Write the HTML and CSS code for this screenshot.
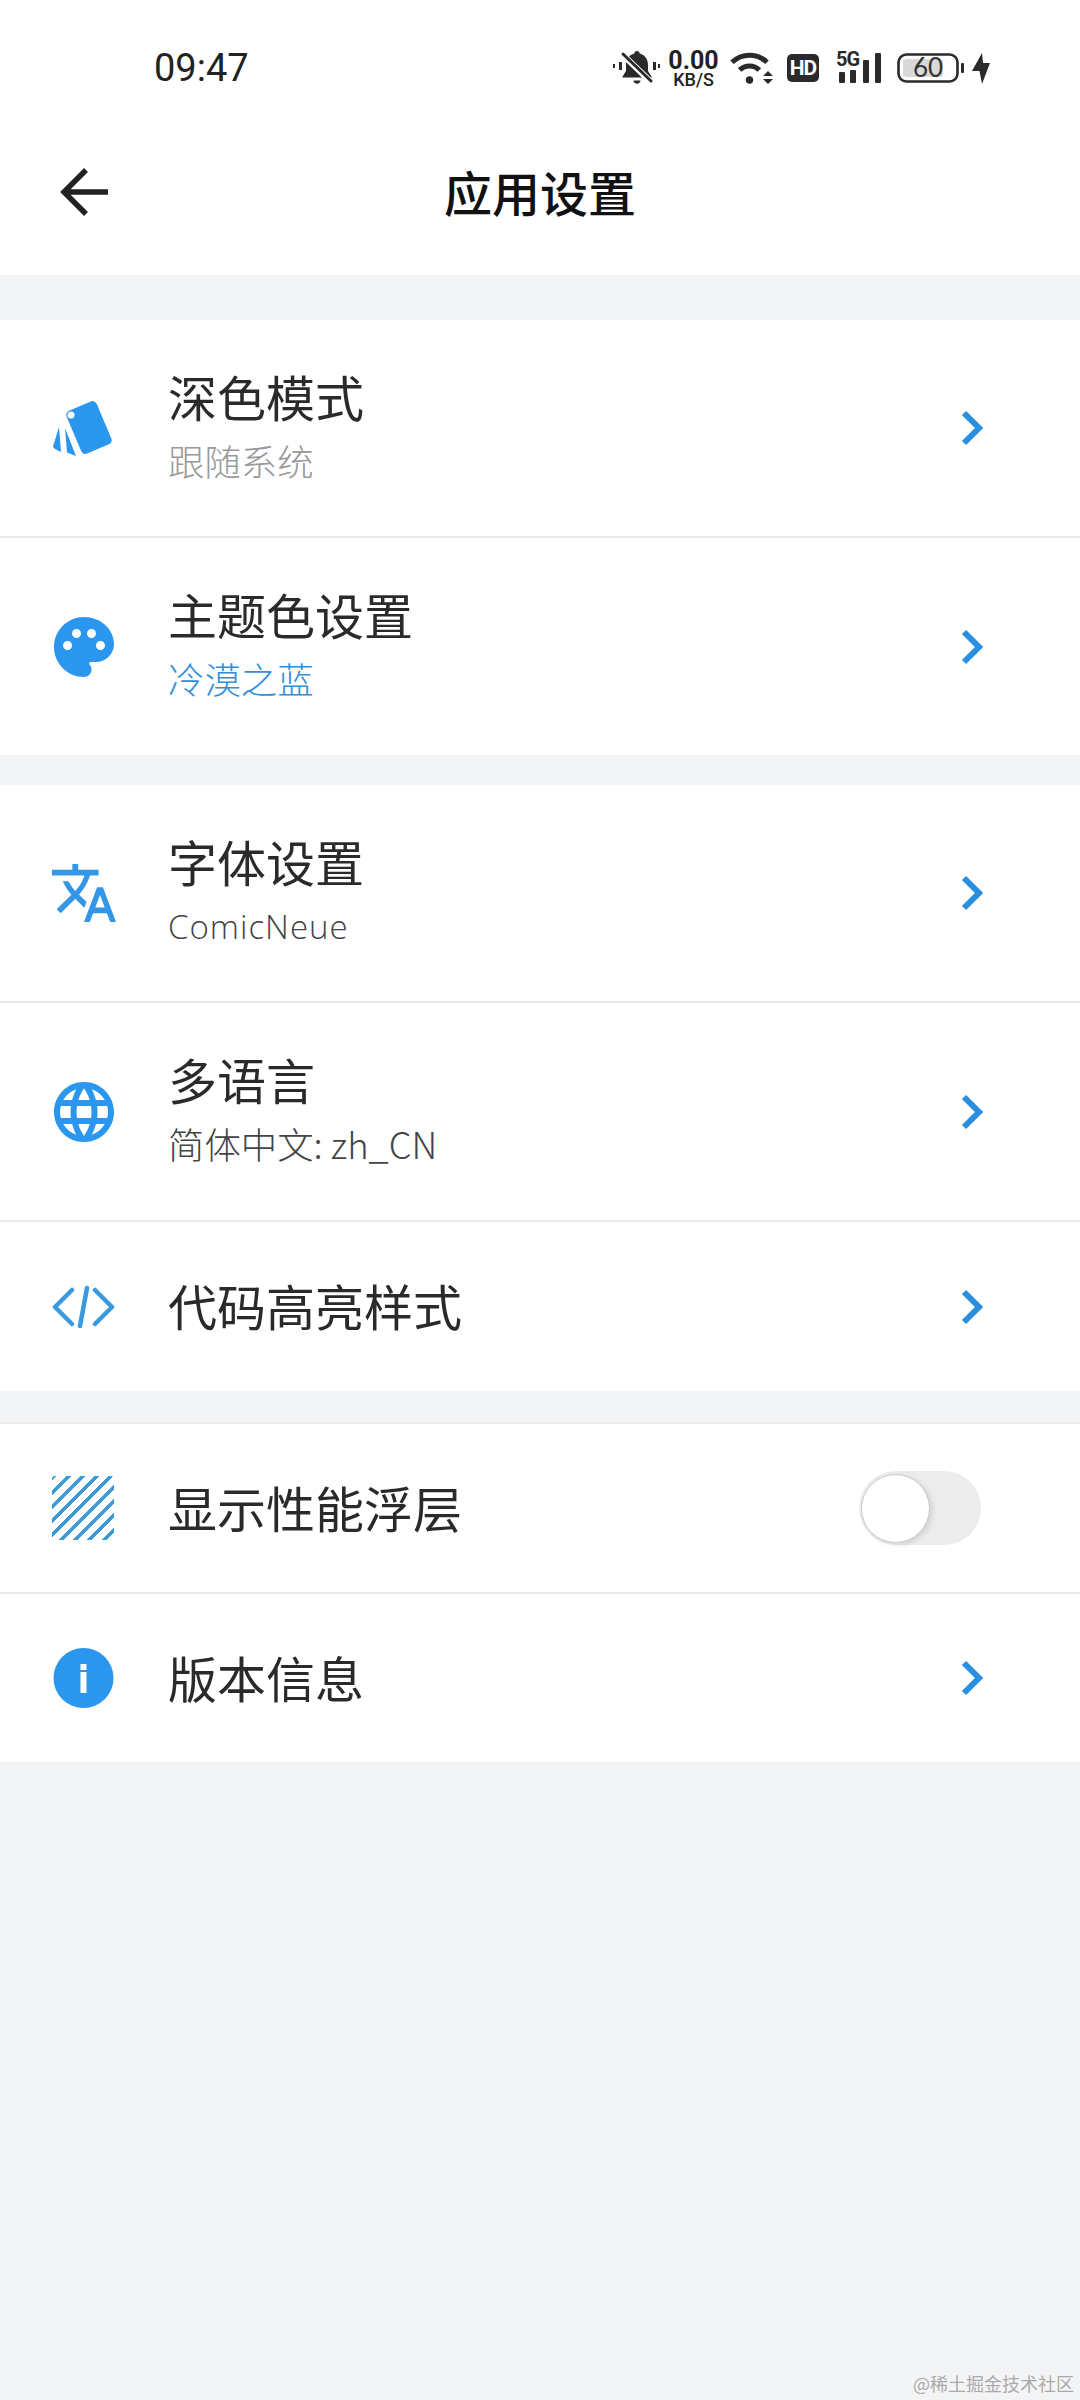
FILE: index.html
```html
<!DOCTYPE html>
<html lang="zh-CN">
<head>
<meta charset="utf-8">
<title>应用设置</title>
<link rel="stylesheet" href="styles.css">
</head>
<body>
<div class="page">
  <header class="top">
    <div class="status">
      <span class="time">09:47</span>
      <div class="status-icons">
        <svg class="s-bell" width="47" height="34" viewBox="0 0 47 34">
          <path fill="#2a2a2a" d="M24 0c-1.6 0-2.7 1-2.7 2.6C16 4 13 8.500 13 14v6l-4 6.500h30L35 20v-6c0-5.500-3-10-8.300-11.400C26.700 1 25.600 0 24 0z"/>
          <path fill="#2a2a2a" d="M20.500 29.500h7c0 1.800-1.500 3.200-3.500 3.200s-3.500-1.400-3.500-3.200z"/>
          <path stroke="#fff" stroke-width="6" d="M7 1l31 30"/>
          <path stroke="#2a2a2a" stroke-width="3" stroke-linecap="round" d="M10 3l28 27"/>
          <path fill="#2a2a2a" d="M0 13h2v4H0zM6 11h3v8H6zM40 11h3v8h-3zM45 13h2v4h-2z"/>
        </svg>
        <div class="s-speed"><span class="speed-num">0.00</span><span class="speed-unit">KB/S</span></div>
        <svg class="s-wifi" width="44" height="34" viewBox="0 0 44 34">
          <path fill="none" stroke="#2a2a2a" stroke-width="5" d="M2 11.300a25 25 0 0 1 35 0M9.600 19.100a14 14 0 0 1 19.800 0"/>
          <circle cx="19.500" cy="29" r="3.700" fill="#2a2a2a"/>
          <path fill="#2a2a2a" d="M38 20l5 5H33zM33 28h10l-5 5z"/>
        </svg>
        <span class="s-hd">HD</span>
        <svg class="s-signal" width="46" height="40" viewBox="0 -4 46 40">
          <text class="five-g" x="0" y="14">5G</text>
          <rect x="3" y="20" width="6" height="11" rx="1" fill="#2a2a2a"/>
          <rect x="14" y="18" width="6" height="13" rx="1" fill="#2a2a2a"/>
          <rect x="27" y="8" width="6" height="23" rx="1" fill="#2a2a2a"/>
          <rect x="39" y="1" width="6" height="30" rx="1" fill="#2a2a2a"/>
        </svg>
        <svg class="s-batt" width="67" height="40" viewBox="0 -5 67 40">
          <rect x="1.500" y="1.500" width="59" height="27" rx="8" fill="#fff" stroke="#2a2a2a" stroke-width="2.600"/>
          <rect x="6" y="6" width="40" height="18" rx="3" fill="#d9d9d9"/>
          <rect x="64" y="10" width="3" height="10" rx="1" fill="#2a2a2a"/>
          <text class="batt-num" x="31" y="24">60</text>
        </svg>
        <svg class="s-bolt" width="18" height="31" viewBox="0 0 18 31">
          <path fill="#2a2a2a" d="M10 0L0 18h7.500L10 31l8-21h-7z"/>
        </svg>
      </div>
    </div>
    <div class="toolbar">
      <svg class="back" width="50" height="50" viewBox="0 0 50 50">
        <path fill="none" stroke="#222" stroke-width="5.500" d="M27 3L5 25l22 22M5 25h44"/>
      </svg>
      <h1 class="title">应用设置</h1>
    </div>
  </header>

  <section class="group group-first">
    <div class="row row-tall">
      <svg class="icon" viewBox="0 0 64 64">
        <path fill="#2b96ee" d="M7 31L1 50.500q0 2 8 5.500zM13 32l2 24.600 9 3.400z"/>
        <rect x="20.600" y="8.200" width="32.700" height="46.600" rx="4.500" fill="#2b96ee" transform="rotate(-23 37 31.500)"/>
        <circle cx="19" cy="19" r="3.500" fill="#fff"/>
      </svg>
      <div class="text"><div class="name">深色模式</div><div class="sub sub-gray">跟随系统</div></div>
      <svg class="chev" viewBox="0 0 24 36"><path d="M4 3l15 15L4 33"/></svg>
    </div>
    <div class="row row-tall row-end">
      <svg class="icon" viewBox="1.330 1.330 21.330 21.330">
        <path fill="#2b96ee" d="M12 2C6.490 2 2 6.490 2 12s4.490 10 10 10c1.380 0 2.500-1.120 2.500-2.500 0-.61-.23-1.200-.64-1.670-.08-.1-.13-.21-.13-.33 0-.28.220-.5.500-.5H16c3.310 0 6-2.690 6-6 0-4.960-4.490-9-10-9zm5.500 11c-.83 0-1.500-.67-1.500-1.500s.67-1.500 1.500-1.500 1.500.67 1.500 1.500-.67 1.500-1.500 1.500zm-3-4c-.83 0-1.500-.67-1.500-1.500S13.670 6 14.500 6s1.500.67 1.500 1.500S15.330 9 14.500 9zM5 11.500c0-.83.67-1.500 1.500-1.500s1.500.67 1.500 1.500S7.330 13 6.500 13 5 12.330 5 11.500zm6-4c0 .83-.67 1.500-1.500 1.500S8 8.330 8 7.500 8.670 6 9.500 6s1.500.67 1.500 1.500z"/>
      </svg>
      <div class="text"><div class="name">主题色设置</div><div class="sub sub-blue">冷漠之蓝</div></div>
      <svg class="chev" viewBox="0 0 24 36"><path d="M4 3l15 15L4 33"/></svg>
    </div>
  </section>

  <section class="group group-second">
    <div class="row row-tall">
      <svg class="icon" viewBox="1 1 22 22">
        <path fill="#3396e6" d="M12.870 15.070l-2.540-2.510.03-.03c1.740-1.940 2.980-4.170 3.710-6.530H17V4h-7V2H8v2H1v2h11.170C11.500 7.920 10.440 9.750 9 11.350 8.070 10.320 7.300 9.190 6.690 8h-2c.73 1.630 1.730 3.170 2.980 4.560l-5.090 5.020L4 19l5-5 3.110 3.110.76-2.040zM18.500 10h-2L12 22h2l1.120-3h4.750L21 22h2l-4.500-12zm-2.620 7l1.620-4.330L19.120 17h-3.240z"/>
      </svg>
      <div class="text"><div class="name">字体设置</div><div class="sub sub-dark sub-latin">ComicNeue</div></div>
      <svg class="chev" viewBox="0 0 24 36"><path d="M4 3l15 15L4 33"/></svg>
    </div>
    <div class="row row-tall2">
      <svg class="icon" viewBox="1.330 1.330 21.330 21.330">
        <path fill="#2b96ee" d="M11.990 2C6.470 2 2 6.480 2 12s4.470 10 9.990 10C17.520 22 22 17.520 22 12S17.520 2 11.990 2zm6.930 6h-2.950c-.32-1.250-.78-2.450-1.380-3.560 1.840.63 3.370 1.910 4.330 3.560zM12 4.040c.83 1.200 1.480 2.530 1.910 3.960h-3.820c.43-1.430 1.080-2.760 1.910-3.960zM4.260 14C4.100 13.360 4 12.690 4 12s.1-1.360.26-2h3.380c-.08.66-.14 1.320-.14 2 0 .68.06 1.340.14 2H4.260zm.82 2h2.950c.32 1.250.78 2.450 1.380 3.560-1.840-.63-3.370-1.900-4.330-3.560zm2.950-8H5.080c.96-1.660 2.490-2.930 4.330-3.560C8.810 5.550 8.350 6.750 8.030 8zM12 19.960c-.83-1.200-1.480-2.530-1.910-3.960h3.820c-.43 1.430-1.080 2.760-1.910 3.960zM14.340 14H9.660c-.09-.66-.16-1.320-.16-2 0-.68.07-1.350.16-2h4.680c.09.65.16 1.320.16 2 0 .68-.07 1.340-.16 2zm.25 5.560c.6-1.110 1.060-2.310 1.380-3.560h2.950c-.96 1.650-2.490 2.930-4.330 3.560zM16.360 14c.08-.66.14-1.320.14-2 0-.68-.06-1.340-.14-2h3.380c.16.64.26 1.310.26 2s-.1 1.360-.26 2h-3.380z"/>
      </svg>
      <div class="text"><div class="name">多语言</div><div class="sub sub-dark">简体中文: zh_CN</div></div>
      <svg class="chev" viewBox="0 0 24 36"><path d="M4 3l15 15L4 33"/></svg>
    </div>
    <div class="row row-short row-end">
      <svg class="icon" viewBox="0 0 64 64">
        <path fill="none" stroke="#3a9ae0" stroke-width="4.500" stroke-linecap="round" stroke-linejoin="round" d="M20 15L3 32l17 17M43 15l17 17-17 17M35 13l-7 38"/>
      </svg>
      <div class="text"><div class="name">代码高亮样式</div></div>
      <svg class="chev" viewBox="0 0 24 36"><path d="M4 3l15 15L4 33"/></svg>
    </div>
  </section>

  <section class="group group-third">
    <div class="row row-short2">
      <div class="stripes"></div>
      <div class="text"><div class="name">显示性能浮层</div></div>
      <div class="toggle"><span class="knob"></span></div>
    </div>
    <div class="row row-short3 row-end">
      <svg class="icon" viewBox="0 0 64 64">
        <circle cx="31.500" cy="32" r="30" fill="#2b96ee"/>
        <path fill="#fff" d="M28.500 18h6v6h-6zM28.500 26h6v21h-6z"/>
      </svg>
      <div class="text"><div class="name">版本信息</div></div>
      <svg class="chev" viewBox="0 0 24 36"><path d="M4 3l15 15L4 33"/></svg>
    </div>
  </section>

  <footer class="mark">@稀土掘金技术社区</footer>
</div>
</body>
</html>
```

FILE: styles.css
```css
* { box-sizing: border-box; }
html, body { margin: 0; padding: 0; }
body {
  width: 1080px;
  height: 2400px;
  background: #f3f4f6;
  font-family: "Noto Sans CJK SC", "Noto Sans", sans-serif;
  color: #222;
}
.page {
  height: 2400px;
  display: flex;
  flex-direction: column;
}
.top {
  height: 275px;
  background: #fff;
  flex: none;
}
.status {
  height: 110px;
  padding: 26px 90px 0 154px;
  display: flex;
  align-items: center;
  justify-content: space-between;
}
.time {
  font-family: Roboto, sans-serif;
  font-size: 38px;
  font-weight: 400;
  color: #222;
  line-height: 40px;
}
.status-icons {
  display: flex;
  align-items: center;
}
.status-icons svg { display: block; flex: none; }
.s-speed {
  margin-left: 7px;
  width: 53px;
  display: flex;
  flex-direction: column;
  align-items: center;
  color: #222;
  font-family: Roboto, sans-serif;
}
.speed-num { font-size: 25px; font-weight: 700; line-height: 23px; }
.speed-unit { font-size: 18px; font-weight: 500; line-height: 16px; }
.s-wifi { margin-left: 10px; }
.s-hd {
  margin-left: 13px;
  width: 32px;
  height: 28px;
  border-radius: 5px;
  background: #2a2a2a;
  color: #fff;
  font-family: Roboto, sans-serif;
  font-size: 21px;
  font-weight: 700;
  letter-spacing: -1px;
  line-height: 28px;
  text-align: center;
}
.s-signal { margin-left: 17px; }
.five-g {
  font-family: Roboto, sans-serif;
  font-size: 20px;
  font-weight: 700;
  letter-spacing: -1px;
  fill: #2a2a2a;
}
.s-batt { margin-left: 15px; }
.batt-num {
  font-family: Lato, sans-serif;
  font-size: 26px;
  font-weight: 400;
  fill: #333;
  text-anchor: middle;
}
.s-bolt { margin-left: 8px; }

.toolbar {
  height: 165px;
  padding-left: 59px;
  display: flex;
  align-items: center;
}
.back { display: block; flex: none; margin-top: -2px; }
.title {
  margin: 0 0 4px -109px;
  flex: 1;
  text-align: center;
  font-size: 48px;
  font-weight: 500;
  line-height: 66px;
  color: #111;
}

.group { background: #fff; flex: none; }
.group-first { margin-top: 45px; }
.group-second { margin-top: 30px; }
.group-third { margin-top: 31px; border-top: 2px solid #ececec; }
.row {
  display: flex;
  align-items: center;
  padding-left: 52px;
  border-bottom: 2px solid #e9e9e9;
}
.row-end { border-bottom: 0; }
.row-tall { height: 218px; }
.row-tall.row-end { height: 217px; }
.row-tall2 { height: 219px; }
.row-short { height: 169px; }
.row-short.row-end { height: 169px; }
.row-short2 { height: 170px; }
.row-short3 { height: 168px; }
.icon { width: 64px; height: 64px; flex: none; display: block; }
.text { margin: 0 0 3px 52px; flex: 1; }
.name { font-size: 49px; font-weight: 400; line-height: 66px; color: #2a2a2a; }
.sub { font-size: 36.400px; font-weight: 300; line-height: 62px; }
.sub-gray { color: #999; }
.sub-blue { color: #2f8fd8; }
.sub-dark { color: #444; }
.sub-latin {
  font-family: "Open Sans", sans-serif;
  font-weight: 300;
  font-size: 33px;
  letter-spacing: 1px;
  line-height: 58px;
  padding-top: 4px;
}
.chev {
  width: 24px;
  height: 36px;
  flex: none;
  margin-right: 96px;
  fill: none;
  stroke: #2b8fe0;
  stroke-width: 6;
}
.stripes {
  width: 62px;
  height: 64px;
  flex: none;
  margin-right: 2px;
  border-radius: 3px;
  background: repeating-linear-gradient(135deg, #3d9ad8 0 3.500px, #fff 3.500px 10px);
}
.toggle {
  width: 122px;
  height: 74px;
  flex: none;
  margin-right: 99px;
  padding: 3px 0 0 2px;
  border-radius: 37px;
  background: #ececec;
}
.knob {
  display: block;
  width: 69px;
  height: 69px;
  border-radius: 50%;
  background: #fff;
  border: 1px solid #c9c9c9;
  box-shadow: 3px 2px 5px rgba(0, 0, 0, 0.1);
}
.mark {
  margin-top: auto;
  padding: 0 6px 4px 0;
  text-align: right;
  font-size: 18px;
  line-height: 26px;
  color: #aaa;
}
```
